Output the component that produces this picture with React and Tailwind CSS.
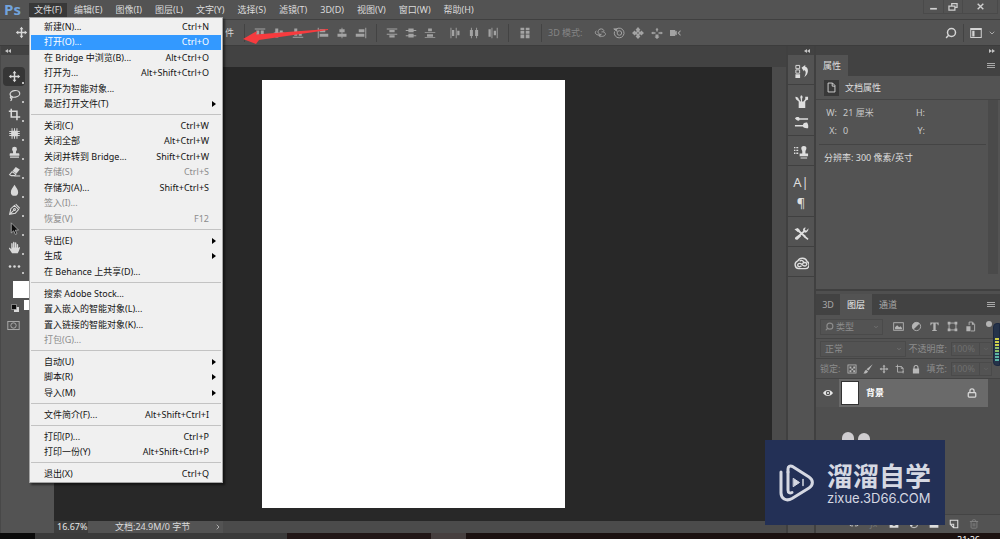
import { ChevronDown, ChevronRight, Lock, Search, Trash2 } from "lucide-react";

const MENUS = [
  "文件(F)",
  "编辑(E)",
  "图像(I)",
  "图层(L)",
  "文字(Y)",
  "选择(S)",
  "滤镜(T)",
  "3D(D)",
  "视图(V)",
  "窗口(W)",
  "帮助(H)",
];

// One array per group, a divider is drawn between groups
const FILE_MENU = [
  [
    { label: "新建(N)...", keys: "Ctrl+N" },
    { label: "打开(O)...", keys: "Ctrl+O", active: true },
    { label: "在 Bridge 中浏览(B)...", keys: "Alt+Ctrl+O" },
    { label: "打开为...", keys: "Alt+Shift+Ctrl+O" },
    { label: "打开为智能对象..." },
    { label: "最近打开文件(T)", sub: true },
  ],
  [
    { label: "关闭(C)", keys: "Ctrl+W" },
    { label: "关闭全部", keys: "Alt+Ctrl+W" },
    { label: "关闭并转到 Bridge...", keys: "Shift+Ctrl+W" },
    { label: "存储(S)", keys: "Ctrl+S", disabled: true },
    { label: "存储为(A)...", keys: "Shift+Ctrl+S" },
    { label: "签入(I)...", disabled: true },
    { label: "恢复(V)", keys: "F12", disabled: true },
  ],
  [
    { label: "导出(E)", sub: true },
    { label: "生成", sub: true },
    { label: "在 Behance 上共享(D)..." },
  ],
  [
    { label: "搜索 Adobe Stock..." },
    { label: "置入嵌入的智能对象(L)..." },
    { label: "置入链接的智能对象(K)..." },
    { label: "打包(G)...", disabled: true },
  ],
  [
    { label: "自动(U)", sub: true },
    { label: "脚本(R)", sub: true },
    { label: "导入(M)", sub: true },
  ],
  [{ label: "文件简介(F)...", keys: "Alt+Shift+Ctrl+I" }],
  [
    { label: "打印(P)...", keys: "Ctrl+P" },
    { label: "打印一份(Y)", keys: "Alt+Shift+Ctrl+P" },
  ],
  [{ label: "退出(X)", keys: "Ctrl+Q" }],
];

/* ---------- Icons (16 x 16 grid) ---------- */

const Svg = ({ size = 14, children }) => (
  <svg
    width={size}
    height={size}
    viewBox="0 0 16 16"
    fill="currentColor"
    className="shrink-0"
    aria-hidden="true"
  >
    {children}
  </svg>
);

const stroke = { fill: "none", stroke: "currentColor", strokeWidth: 1.3 };

const ICONS = {
  move: (
    <path d="M8 1l2.400 3H8.900v3.100H12V5.600L15 8l-3 2.400V8.900H8.900V12h1.500L8 15l-2.400-3h1.500V8.900H4v1.500L1 8l3-2.400v1.500h3.100V4H5.600z" />
  ),
  lasso: (
    <g {...stroke} strokeWidth="1.500">
      <ellipse cx="8.500" cy="6" rx="6" ry="4" transform="rotate(-10 8.500 6)" />
      <path d="M4 9c-1.500.5-1.500 2.500 0 2.500s1.500-2 .3-2.500M4.500 11.500c.2 1-.3 2.500-1.500 3" />
    </g>
  ),
  crop: <path d="M4 1v10h11M1 4h10v11" {...stroke} strokeWidth="1.900" />,
  patch: (
    <g>
      <rect x="4" y="4.500" width="8" height="7" rx="1.500" />
      <path d="M5 1.500v13M8 1.500v13M11 1.500v13M1.500 5.500h13M1.500 8h13M1.500 10.500h13" {...stroke} strokeWidth="1.200" />
    </g>
  ),
  stamp: (
    <path d="M8 1a3 3 0 0 1 3 3c0 1.500-1.200 2-1.200 3.500V9H13a1 1 0 0 1 1 1v2H2v-2a1 1 0 0 1 1-1h3.200V7.500C6.200 6 5 5.500 5 4a3 3 0 0 1 3-3zM2.500 13h11v1.500h-11z" />
  ),
  eraser: (
    <g>
      <path d="M9.500 2.500l5 3-4 5-5-3z" />
      <path d="M5 8.300l4.700 2.900-1.500 1.900H4l-2-1.300z" {...stroke} />
      <path d="M8 13.500h7" {...stroke} />
    </g>
  ),
  drop: <path d="M8 1c2 3.500 4.500 6 4.500 9a4.500 4.500 0 0 1-9 0c0-3 2.500-5.500 4.500-9z" />,
  pen: (
    <g {...stroke}>
      <path d="M2 14l1.500-7L8 3l5 5-4 4.500zM2 14l5-5M9.500 1.500l5 5" />
      <circle cx="8" cy="8" r="1.200" />
    </g>
  ),
  arrow: <path d="M4 1l9 9H9l2 4.500-2 .8-2-4.500L4 13.500z" fill="#0d0d0d" stroke="#bbb" strokeWidth=".9" />,
  hand: (
    <path d="M5 15L1.300 9.500c-.6-1 .6-1.700 1.300-1L4 10V3.500c0-1.200 1.600-1.200 1.700 0V8h.5V2c0-1.300 1.800-1.300 1.800 0v6h.5V2.500c0-1.200 1.800-1.200 1.800 0V8h.5V4.500c0-1.200 1.700-1.200 1.700 0V8l.5.5c.4-1.500 2-1.200 1.700 0L13.500 12l-1.500 3z" />
  ),
  dots: (
    <g>
      <circle cx="2.500" cy="8" r="1.600" />
      <circle cx="8" cy="8" r="1.600" />
      <circle cx="13.500" cy="8" r="1.600" />
    </g>
  ),
  alignTop: <path d="M1 2h14v1.200H1zM3 4.500h4V14H3zM9 4.500h4V10H9z" />,
  alignMiddle: <path d="M3 2h4v12H3zM9 4.500h4v7H9zM1 7.400h14v1.200H1z" />,
  alignBottom: <path d="M1 13h14v1.200H1zM3 2h4v9.500H3zM9 6h4v5.500H9z" />,
  alignLeft: <path d="M1 1h1.300v14H1zM3.500 3H11v4H3.500zM3.500 9H15v4H3.500z" />,
  alignCenter: <path d="M7.400 1h1.200v14H7.400zM4.500 3h7v4h-7zM2 9h12v4H2z" />,
  alignRight: <path d="M13.700 1H15v14h-1.300zM5 3h7.500v4H5zM1 9h11.500v4H1z" />,
  distTop: <path d="M1 2h14v1.200H1zM4.500 4h7v3h-7zM1 9h14v1.200H1zM4.500 11h7v3h-7z" />,
  distMiddle: <path d="M1 4h14v1.200H1zM4.500 2h7v5h-7zM1 11h14v1.200H1zM4.500 9h7v5h-7z" />,
  distBottom: <path d="M1 6.500h14v1.200H1zM5.500 2h5v3.500h-5zM1 13.500h14v1.200H1zM4 9.500h8v3.500H4z" />,
  distLeft: <path d="M2 1h1.200v14H2zM4 4h3v8H4zM9 1h1.200v14H9zM11 5h3v6h-3z" />,
  distCenter: <path d="M3.900 1h1.200v14H3.900zM2.500 4h4v8h-4zM10.900 1h1.200v14h-1.200zM9.500 4h4v8h-4z" />,
  distRight: <path d="M6 1h1.200v14H6zM2 3h3v10H2zM13 1h1.200v14H13zM9 5h3v6H9z" />,
  autoAlign: <path d="M2 1h5v3H2zM9 1h5v3H9zM2 5h5v4H2zM9 5h5v4H9zM2 10h5v5H2zM9 10h5v5H9z" />,
  orbit3d: (
    <g {...stroke}>
      <path d="M6 4c3-3 8-1 7 2M3 5c-3 3 0 6 4 5.500M6 4.500C4 7 7 11 10 9.500" />
      <path d="M10 6.500c4-.5 6 2 5 4s-6 3-8 .5M8.500 13.500L6.500 11l3-.8" />
    </g>
  ),
  roll3d: (
    <g {...stroke}>
      <path d="M4 3a6.500 6.500 0 1 1-2 3" />
      <circle cx="8.500" cy="8" r="3" />
      <path d="M1 2.500h4v3z" fill="currentColor" />
    </g>
  ),
  pan3d: (
    <path
      d="M8 0l3.200 3.500-1.700 1.700 1.300 1.300 1.700-1.700L16 8l-3.500 3.200-1.700-1.700-1.300 1.300 1.700 1.700L8 16l-3.200-3.500 1.700-1.700-1.300-1.300-1.700 1.700L0 8l3.500-3.200 1.700 1.700 1.300-1.300-1.700-1.700zM8 6.700L6.700 8 8 9.300 9.300 8z"
      fillRule="evenodd"
    />
  ),
  slide3d: (
    <path d="M8 1l2 2.500H9V6H7V3.500H6zM0 8l3-2v1h3v2H3v1zM16 8l-3-2v1h-3v2h3v1zM6 10h4v3h1.500L8 16l-3.500-3H6z" />
  ),
  zoom3d: <path d="M0 4h7v2l2-1v6l-2-1v2H0zM10 8l4-4v2l-2 2 2 2v2z" />,
  workspace: (
    <g>
      <rect x="1" y="2" width="14" height="12" {...stroke} />
      <path d="M3 5h3v7.500H3zM1 2h14v2H1z" />
    </g>
  ),
  history: (
    <g>
      <path d="M2 1.500h4V5H2zM2 6.300h4v3.500H2z" {...stroke} strokeWidth="1" />
      <path d="M1.500 11h5v4h-5zM8 4l4-3v2c4 1 4 8-1 11 2-4 2-6.500-.3-7.500V8z" />
    </g>
  ),
  brushes: (
    <path d="M5 8h7v7H5zM7.500 1.200c2 .3 2 2.800 1.200 3.300L8.500 8h-1L7 4.500c-.7-1 0-2.500.5-3.300zM1.500 3c2 0 3.500 1 3.500 2.500L7 8H5L3.700 6.800C2 6.500 1.500 4.500 1.500 3zM12 3h3v3l-1.500.5L12 8h-2l2-2.500z" />
  ),
  brushSettings: (
    <path d="M1 3.500c1.500-2 4.500-2 5 0h9v1.600H6c-.5 2-3.500 1-5-1.600zM1 10.700h8.500c.5-2.500 2.500-3 4.500-2.700 1.200 2 1.500 4 1 6-2.500.3-5-.2-5.500-1.700H1z" />
  ),
  cloneSource: (
    <g>
      <path d="M0 2h1.500v1.500H0zM2.500 2h2v1.500h-2zM0 5h1.500v1.500H0zM2.500 5h2v1.500h-2zM0 8h1.500v1.500H0zM2.500 8h2v1.500h-2z" />
      <path d="M10.500 1a2.700 2.700 0 0 1 2.700 3c-.2 1.300-1 1.800-1 3v2H15v3H6V9h2.800V7c0-1.200-.8-1.700-1-3a2.700 2.700 0 0 1 2.700-3zM7 13.200h7v1.300H7z" />
    </g>
  ),
  presets: (
    <g>
      <path d="M3.500 4L12 11.500M5 11l6-5.500" {...stroke} strokeWidth="2" />
      <path d="M.5 3.500L4 2l2.500 2.500L4 6.500zM15.500 2.500L13 5l-1.500-1 1-2.500C10 1.500 9 3.500 10 5.500l1.500 1.500c2 .5 4-1.500 4-4.500zM5.500 9l2 2L4 14.500c-2 1-4-1-2.500-2.500zM10 11.500l1.500-1.500 4 3.500-1 1.500z" />
    </g>
  ),
  cloud: (
    <g {...stroke} strokeWidth="1.500">
      <path d="M5 13.500a4.300 4.300 0 0 1-1-8.300A5.500 5.500 0 0 1 14 6a4 4 0 0 1-2 7.500z" />
      <path d="M8 10.500c-2 2-4.500.5-4-1.300s3-1.700 4.500-.2 3 2.500 4.500 1 .2-3.200-1.500-3-2.500 1-2 1.500M6 5.500c2-1.700 4-.5 4.500 1.500" />
    </g>
  ),
  doc: <path d="M3 1.500h6.500L13 5v9.500H3zM9 1.500V6h4" {...stroke} />,
  picture: (
    <g>
      <rect x="1" y="2.500" width="14" height="11" {...stroke} />
      <path d="M3 12V9l3-3 3 3 2-1.500L13 10v2z" />
    </g>
  ),
  adjust: (
    <g>
      <circle cx="8" cy="8" r="6" {...stroke} />
      <path d="M12.500 3.500A6.300 6.300 0 0 0 3.500 12.500z" />
    </g>
  ),
  type: <path d="M2 2h12v4h-1.300c-.2-1.500-.7-2.200-3-2.200V13l1.800.4V14.500h-7v-1.100L6.300 13V3.800c-2.300 0-2.800.7-3 2.200H2z" />,
  shape: (
    <g>
      <path d="M3 3h10v10H3z" {...stroke} />
      <path d="M1 1h4v4H1zM11 1h4v4h-4zM1 11h4v4H1zM11 11h4v4h-4z" />
    </g>
  ),
  smart: (
    <g>
      <path d="M6 6V1.500h5L14 5v9.500H8.500" {...stroke} />
      <path d="M2 7.500h6V15H2zM10 1v4.500h4z" />
    </g>
  ),
  checker: (
    <g>
      <rect x="1.500" y="1.500" width="13" height="13" {...stroke} />
      <path d="M4 4h3v3H4zM10 4h3v3h-3zM7 7h3v3H7zM4 10h3v3H4zM10 10h3v3h-3z" />
    </g>
  ),
  brush: <path d="M15.500.5L9 10.500 5.500 8.500zM5 9.500l3 2C7.500 14.500 4 15.500.5 15c2-.8 1.500-5 4.500-5.500z" />,
  artboard: <path d="M4 1v12h9V6.500L10.500 4H1M10 4v3h3M13 11v4" {...stroke} />,
  lock: <path d="M3 7h1V5.500a4 4 0 0 1 8 0V7h1v8H3zM5.700 7h4.600V5.500a2.300 2.300 0 0 0-4.600 0z" fillRule="evenodd" />,
  eye: (
    <path
      d="M0 8c4-6.500 12-6.500 16 0-4 6.500-12 6.500-16 0zm8-3.500a3.500 3.500 0 1 0 0 7 3.500 3.500 0 0 0 0-7zm0 1.800a1.700 1.700 0 1 1 0 3.400 1.700 1.700 0 0 1 0-3.400z"
      fillRule="evenodd"
    />
  ),
  link: <path d="M6.500 5H4a3 3 0 0 0 0 6h2.500M9.500 5H12a3 3 0 0 1 0 6H9.500M5 8h6" {...stroke} />,
  mask: <path d="M1 2h14v12H1zM8 5a3 3 0 1 0 0 6 3 3 0 0 0 0-6z" fillRule="evenodd" />,
  folder: <path d="M1 3h5l1.500 2H15v9H1z" />,
  newLayer: <path d="M2 2h12v12H7.500V8.500H2zM2.500 9l5 5" {...stroke} strokeWidth="1.700" />,
  quickMask: (
    <g {...stroke} strokeWidth="1.100">
      <rect x="1" y="3" width="14" height="10" />
      <circle cx="8" cy="8" r="3.300" />
    </g>
  ),
  minimise: <path d="M2 10.500h12v3H2z" />,
  restore: <path d="M6 6V2.500h8.500v6H11M1.500 6.500H11v6.500H1.500z" {...stroke} strokeWidth="2" />,
  close: <path d="M3 3l10 10M13 3L3 13" {...stroke} strokeWidth="2.500" />,
};

const Icon = ({ name, size }) => <Svg size={size}>{ICONS[name]}</Svg>;

const IconButton = ({ name, label, size = 12, className = "" }) => (
  <button
    type="button"
    aria-label={label ?? name}
    className={`flex shrink-0 items-center justify-center ${className}`}
  >
    <Icon name={name} size={size} />
  </button>
);

const Collapse = ({ right }) => (
  <svg width="6" height="4" viewBox="0 0 6 4" fill="#c4c4c4" aria-hidden="true">
    {right ? <path d="M0 0l3 2-3 2zM3 0l3 2-3 2z" /> : <path d="M3 0L0 2l3 2zM6 0L3 2l3 2z" />}
  </svg>
);

const PanelMenu = () => (
  <button type="button" aria-label="面板菜单" className="ml-auto flex h-[21px] items-center pr-[5px] text-[#a8a8a8]">
    <svg width="8" height="6" viewBox="0 0 8 6" fill="currentColor">
      <path d="M0 0h8v1H0zM0 2h8v1H0zM0 4h8v1H0z" />
    </svg>
  </button>
);

/* ---------- Menu bar ---------- */

const FileMenu = () => (
  <div
    role="menu"
    className="absolute left-0 top-[14px] z-30 w-[194px] border border-[#a5a5a5] bg-[#f0f0f0] px-px pt-px text-[#141414] shadow-[2px_2px_2px_rgba(0,0,0,0.5)]"
  >
    {FILE_MENU.map((group, i) => (
      <div key={i}>
        {i > 0 && (
          <div className="flex h-[6px] items-center">
            <div className="h-px w-full bg-[#c3c3c3]" />
          </div>
        )}
        <div>
          {group.map((item) => (
            <button
              key={item.label}
              type="button"
              role="menuitem"
              disabled={item.disabled}
              className={`flex w-full items-center justify-between whitespace-nowrap pl-[13px] odd:h-4 even:h-[15px] ${
                item.sub ? "pr-[5px]" : "pr-[12px]"
              } ${item.active ? "bg-[#3399ff] text-white" : ""} ${
                item.disabled ? "text-[#8c8c8c]" : ""
              }`}
            >
              <span>{item.label}</span>
              {item.keys && <span>{item.keys}</span>}
              {item.sub && (
                <svg width="4" height="6" viewBox="0 0 4 6" aria-hidden="true">
                  <path d="M0 0l4 3-4 3z" />
                </svg>
              )}
            </button>
          ))}
        </div>
      </div>
    ))}
  </div>
);

const MenuBar = () => (
  <header className="flex h-5 shrink-0 items-center border-b border-[#404040] bg-[#535353]">
    <span className="w-[29px] self-start pl-[4px] font-['Open_Sans',sans-serif] text-[15px] font-bold leading-[18px] text-[#72a3dc]">
      Ps
    </span>
    <nav className="flex items-center gap-px">
      {MENUS.map((label, i) => (
        <div key={label} className="relative">
          <button
            type="button"
            className={`block h-[14px] whitespace-nowrap leading-[14px] ${
              i === 0 ? "bg-[#383838] px-[5px]" : "px-[6px]"
            }`}
          >
            {label}
          </button>
          {i === 0 && <FileMenu />}
        </div>
      ))}
    </nav>
    <div className="ml-auto mr-[2px] flex h-[14px] self-start text-[#d0d0d0]">
      <IconButton name="minimise" label="最小化" size={9} className="w-[21px] border-x border-b border-[#4a4a4a]" />
      <IconButton name="restore" label="还原" size={10} className="w-[19px] border-r border-b border-[#4a4a4a]" />
      <IconButton name="close" label="关闭" size={9} className="w-[35px] border-r border-b border-[#4a4a4a]" />
    </div>
  </header>
);

/* ---------- Options bar ---------- */

const Divider = () => <div className="h-[18px] w-px shrink-0 bg-[#434343]" />;

const IconGroup = ({ names }) => (
  <div className="flex gap-[7px]">
    {names.map((n) => (
      <IconButton key={n} name={n} />
    ))}
  </div>
);

const OptionsBar = () => (
  <div className="flex h-[26px] shrink-0 items-center border-b border-[#3c3c3c] bg-[#535353] text-[#a3a3a3]">
    <div className="flex w-[244px] shrink-0 items-center justify-between pl-[15px] pr-[10px] text-[#d8d8d8]">
      <Icon name="move" size={13} />
      <span>件</span>
    </div>
    <Divider />
    <div className="flex gap-[13px] px-[9px]">
      <IconGroup names={["alignTop", "alignMiddle", "alignBottom"]} />
      <IconGroup names={["alignLeft", "alignCenter", "alignRight"]} />
    </div>
    <Divider />
    <div className="flex gap-[13px] px-[9px]">
      <IconGroup names={["distTop", "distMiddle", "distBottom"]} />
      <IconGroup names={["distLeft", "distCenter", "distRight"]} />
    </div>
    <Divider />
    <div className="px-[10px]">
      <IconButton name="autoAlign" />
    </div>
    <Divider />
    <span className="pl-[6px] pr-[12px] text-[#858585]">3D 模式:</span>
    <IconGroup names={["orbit3d", "roll3d", "pan3d", "slide3d", "zoom3d"]} />
    <div className="ml-auto flex items-center gap-[6px] pr-[4px] text-[#d4d4d4]">
      <button type="button" aria-label="搜索">
        <Search size={12} strokeWidth={3} className="-scale-x-100" />
      </button>
      <Divider />
      <IconButton name="workspace" label="工作区" />
      <ChevronDown size={8} />
    </div>
  </div>
);

/* ---------- Tools ---------- */

const TOOLS = ["move", "lasso", "crop", "patch", "stamp", "eraser", "drop", "pen", "arrow", "hand", "dots"];

const Toolbar = () => (
  <aside className="flex w-[54px] shrink-0 flex-col border-l border-[#484848] bg-[#535353]">
    <div className="flex h-[9px] items-center bg-[#424242] pl-[4px]">
      <Collapse />
    </div>
    <div className="flex w-[26px] flex-col items-center pt-[12px] text-[#d9d9d9]">
      {TOOLS.map((name, i) => (
        <button
          key={name}
          type="button"
          aria-label={name}
          className={`relative flex h-[19px] w-[22px] items-center justify-center rounded-sm ${
            i === 0 ? "bg-[#363636]" : ""
          }`}
        >
          <Icon name={name} size={13} />
          <span className="absolute bottom-[2px] right-px h-[2px] w-[2px] bg-[#bdbdbd]" />
        </button>
      ))}
    </div>
    <div className="grid w-[42px] grid-cols-[12px_11px_19px] pt-[5px]">
      <button type="button" aria-label="前景色" className="col-span-2 col-start-2 h-[17px] w-[17px] bg-white" />
      <span className="col-start-1 row-start-2 flex h-[20px] w-[18px] items-center justify-end">
        <svg width="8" height="8" viewBox="0 0 8 8" aria-hidden="true">
          <path d="M3 3h5v5H3z" fill="#d9d9d9" />
          <path d="M.5.5h5v5h-5z" fill="#0c0c0c" stroke="#bbb" strokeWidth=".6" />
        </svg>
      </span>
      <button type="button" aria-label="背景色" className="col-start-3 row-start-2 mt-[2px] h-[10px] bg-white" />
    </div>
    <div className="pl-[6px] pt-px text-[#b0b0b0]">
      <IconButton name="quickMask" label="快速蒙版" size={13} />
    </div>
  </aside>
);

/* ---------- Document ---------- */

const Workspace = () => (
  <main className="flex min-w-0 flex-1 flex-col">
    <div className="h-[21px] shrink-0 bg-[#424242]" />
    <div className="flex min-h-0 flex-1">
      <div className="flex min-w-0 flex-1 justify-center bg-[#282828] py-[13px]">
        <div className="aspect-[303/428] h-full bg-white" />
      </div>
      <div className="w-[14px] shrink-0 bg-[#4b4b4b]" />
    </div>
    <footer className="flex h-[12px] shrink-0 items-center bg-[#4b4b4b] leading-[12px]">
      <span className="w-[34px] bg-[#3d3d3d] pl-[3px] text-[#e6e6e6]">16.67%</span>
      <span className="flex w-[135px] items-center justify-between bg-[#535353] pl-[27px] pr-[1px]">
        文档:24.9M/0 字节
        <ChevronRight size={8} />
      </span>
    </footer>
  </main>
);

/* ---------- Right dock ---------- */

const DOCK = [["history"], ["brushes", "brushSettings"], ["cloneSource"], ["character", "paragraph"], ["presets"], ["cloud"]];

const DOCK_TEXT = { character: "A|", paragraph: "¶" };

const IconDock = () => (
  <aside className="flex w-[30px] shrink-0 flex-col border-x-2 border-[#404040] bg-[#535353]">
    <div className="flex h-[9px] items-center justify-end bg-[#424242] pr-[4px]">
      <Collapse />
    </div>
    {DOCK.map((group) => (
      <div
        key={group[0]}
        className="flex flex-col items-center gap-[4px] border-b border-[#404040] pb-[4px] pt-[8px] text-[#dedede]"
      >
        {group.map((name) =>
          DOCK_TEXT[name] ? (
            <button key={name} type="button" aria-label={name} className="h-[17px] text-[13px] leading-[17px]">
              {DOCK_TEXT[name]}
            </button>
          ) : (
            <IconButton key={name} name={name} size={15} className="h-[17px]" />
          )
        )}
      </div>
    ))}
  </aside>
);

const Properties = () => (
  <section className="flex h-[236px] shrink-0 flex-col border-b-2 border-[#404040]">
    <div className="flex h-[21px] shrink-0 bg-[#424242]">
      <h2 className="bg-[#535353] px-[7px] leading-[21px]">属性</h2>
      <PanelMenu />
    </div>
    <div className="flex h-[24px] shrink-0 items-center gap-[6px] border-b border-[#444] pl-[8px]">
      <span className="flex h-4 w-[15px] items-center justify-center bg-[#383838]">
        <Icon name="doc" size={11} />
      </span>
      文档属性
    </div>
    <div className="flex h-[174px]">
      <div className="min-w-0 flex-1 pl-[3px] pr-[2px]">
        <dl className="grid grid-cols-[18px_60px_16px_1fr] gap-x-[6px] border-b border-[#444] pb-[4px] pt-[4px] leading-[18px] text-[#c8c8c8] [&>dt]:text-right">
          <dt>W:</dt>
          <dd>21 厘米</dd>
          <dt>H:</dt>
          <dd />
          <dt>X:</dt>
          <dd>0</dd>
          <dt>Y:</dt>
          <dd />
        </dl>
        <p className="pl-[5px] pt-[4px] leading-[18px]">分辨率: 300 像素/英寸</p>
      </div>
      <div className="mr-[2px] w-[10px] bg-[#4a4a4a]" />
    </div>
  </section>
);

const FILTERS = ["picture", "adjust", "type", "shape", "smart"];
const LOCKS = ["checker", "brush", "move", "artboard", "lock"];

const Percent = ({ id, label }) => (
  <>
    <label htmlFor={id} className="ml-auto whitespace-nowrap">
      {label}
    </label>
    <div className="ml-[4px] flex h-[14px] items-center border border-[#4a4a4a]">
      <input id={id} defaultValue="100%" className="w-[27px] bg-transparent text-[#6e6e6e] outline-none" />
      <span className="flex h-full w-[12px] items-center justify-center border-l border-[#4a4a4a] text-[#6e6e6e]">
        <ChevronDown size={6} />
      </span>
    </div>
  </>
);

const Layers = () => (
  <section className="flex min-h-0 flex-1 flex-col bg-[#4f4f4f] pt-[3px]">
    <div className="flex h-[21px] shrink-0 bg-[#424242] leading-[21px] text-[#a8a8a8]">
      <button type="button" className="w-[24px]">3D</button>
      <button type="button" className="w-[32px] bg-[#535353] text-[#f0f0f0]">图层</button>
      <button type="button" className="w-[32px]">通道</button>
      <PanelMenu />
    </div>
    <div className="flex h-[24px] shrink-0 items-center border-b border-[#444] bg-[#535353] pl-[4px] pr-[8px] text-[#b4b4b4]">
      <div className="flex h-4 w-[63px] items-center gap-[2px] border border-[#4a4a4a] pl-[4px] pr-[3px] text-[#8c8c8c]">
        <Search size={9} strokeWidth={3} className="-scale-x-100" />
        <select aria-label="类型" className="min-w-0 flex-1 appearance-none bg-transparent">
          <option>类型</option>
        </select>
        <ChevronDown size={6} />
      </div>
      <div className="ml-[10px] flex gap-[7px]">
        {FILTERS.map((n) => (
          <IconButton key={n} name={n} size={11} />
        ))}
      </div>
      <span className="mb-[6px] ml-auto h-[6px] w-[6px] rounded-full bg-[#b4b4b4]" />
    </div>
    <div className="flex h-[20px] shrink-0 items-center border-b border-[#444] bg-[#535353] pl-[4px] pr-[8px] text-[#8c8c8c]">
      <div className="flex h-4 w-[86px] items-center border border-[#4a4a4a] pl-[4px] pr-[3px]">
        <select aria-label="混合模式" className="min-w-0 flex-1 appearance-none bg-transparent">
          <option>正常</option>
        </select>
        <ChevronDown size={6} />
      </div>
      <Percent id="opacity" label="不透明度:" />
    </div>
    <div className="flex h-[20px] shrink-0 items-center border-b border-[#444] bg-[#535353] pl-[4px] pr-[8px] text-[#8c8c8c]">
      <span className="w-[26px] whitespace-nowrap">锁定:</span>
      <div className="flex gap-[6px] pl-[1px] text-[#b8b8b8]">
        {LOCKS.map((n) => (
          <IconButton key={n} name={n} size={10} />
        ))}
      </div>
      <Percent id="fill" label="填充:" />
    </div>
    <div className="mr-[12px] flex h-[28px] shrink-0 items-stretch">
      <IconButton name="eye" label="可见性" size={10} className="w-[23px] bg-[#535353] text-[#e8e8e8]" />
      <div className="flex flex-1 items-center bg-[#6a6a6a] pl-[2px] pr-[11px] font-semibold text-white">
        <span className="h-[24px] w-[18px] border border-[#333] bg-white" />
        <span className="pl-[7px]">背景</span>
        <Lock size={10} strokeWidth={3} className="ml-auto text-[#d8d8d8]" />
      </div>
    </div>
    <div className="flex flex-1 items-start gap-[4px] pl-[26px] pt-[25px]">
      <span className="h-[18px] w-[12px] rounded-full bg-[#cfcdd0]" />
      <span className="mt-[1px] h-[18px] w-[12px] rounded-full bg-[#cfcdd0]" />
    </div>
    <div className="flex h-[19px] shrink-0 items-center justify-end gap-[10px] border-t border-[#444] bg-[#535353] pr-[21px] text-[#dcdcdc]">
      <IconButton name="link" size={10} />
      <button type="button" className="w-[10px] text-[#777] italic">fx</button>
      <IconButton name="mask" size={10} />
      <IconButton name="adjust" size={10} />
      <IconButton name="folder" size={10} />
      <IconButton name="newLayer" size={10} />
      <Trash2 size={10} className="text-[#858585]" />
    </div>
  </section>
);

/* ---------- Overlays ---------- */

const RedArrow = () => (
  <svg width="86" height="17" viewBox="0 0 86 17" className="pointer-events-none absolute left-[243px] top-[28px] z-20">
    <path d="M0 11L14 3l-1 3.500Q50 3.500 85 1v1L16 12l-3 4z" fill="#f63b3e" />
  </svg>
);

const LevelMeter = () => (
  <div className="absolute right-0 top-[323px] z-20 h-[43px] w-[7px] rounded-l-sm border border-[#1b2740] bg-[#25334a] pl-[1px] pt-[14px]">
    <svg width="4" height="24" viewBox="0 0 4 24" aria-hidden="true">
      {[0, 1, 2, 3, 4, 5, 6, 7].map((n) => (
        <rect key={n} y={n * 3} width="4" height="2" fill={n < 3 ? "#cfcf4a" : n < 5 ? "#8fc06a" : "#59b3a5"} />
      ))}
    </svg>
  </div>
);

const Watermark = () => (
  <div className="absolute bottom-[14px] right-[55px] z-20 flex h-[85px] w-[180px] items-center gap-[12px] bg-[#233056] pl-[14px] text-[#d5d8e2]">
    <svg width="36" height="38" viewBox="0 0 36 38" fill="none" stroke="currentColor" strokeLinecap="round" strokeLinejoin="round" className="shrink-0">
      <path d="M9 8V5C9 2.500 11 1.500 13.500 2.500L30 13c4.500 3 4.500 8 0 11L13 34.500C7 38 2 34 2 29V8" strokeWidth="3" />
      <path d="M9 8v18c0 3 2 3.500 4 2.500" strokeWidth="3" />
      <path d="M14.500 14.500l6 4-6 4z" fill="currentColor" strokeWidth="1" />
      <path d="M24 15.500v6" strokeWidth="1.500" />
    </svg>
    <div className="whitespace-nowrap">
      <div className="text-[26px] font-bold leading-[30px]">溜溜自学</div>
      <div className="font-['Inter',sans-serif] text-[13px] leading-[14px]">zixue.3D66.COM</div>
    </div>
  </div>
);

const Taskbar = () => (
  <div className="flex h-[6px] shrink-0 overflow-hidden bg-[#1b1110]">
    <div className="w-[35px] bg-[#0a0a0a]" />
    <div className="w-[252px] bg-[#3a3a3a]" />
    <div className="w-[144px] bg-[#211616]" />
    <div className="w-[35px] bg-[#463f3f]" />
    <time className="ml-auto mr-[20px] pt-px leading-[12px] text-white">21:26</time>
  </div>
);

export default function App() {
  return (
    <div className="relative flex h-screen flex-col overflow-hidden bg-[#535353] font-['Noto_Sans','Noto_Sans_CJK_SC',sans-serif] text-[9px] leading-[14px] text-[#dcdcdc]">
      <MenuBar />
      <OptionsBar />
      <div className="flex min-h-0 flex-1">
        <Toolbar />
        <Workspace />
        <IconDock />
        <aside className="flex w-[184px] shrink-0 flex-col bg-[#535353]">
          <div className="flex h-[9px] shrink-0 items-center justify-end bg-[#424242] pr-[5px]">
            <Collapse right />
          </div>
          <Properties />
          <Layers />
        </aside>
      </div>
      <Taskbar />
      <RedArrow />
      <LevelMeter />
      <Watermark />
    </div>
  );
}
